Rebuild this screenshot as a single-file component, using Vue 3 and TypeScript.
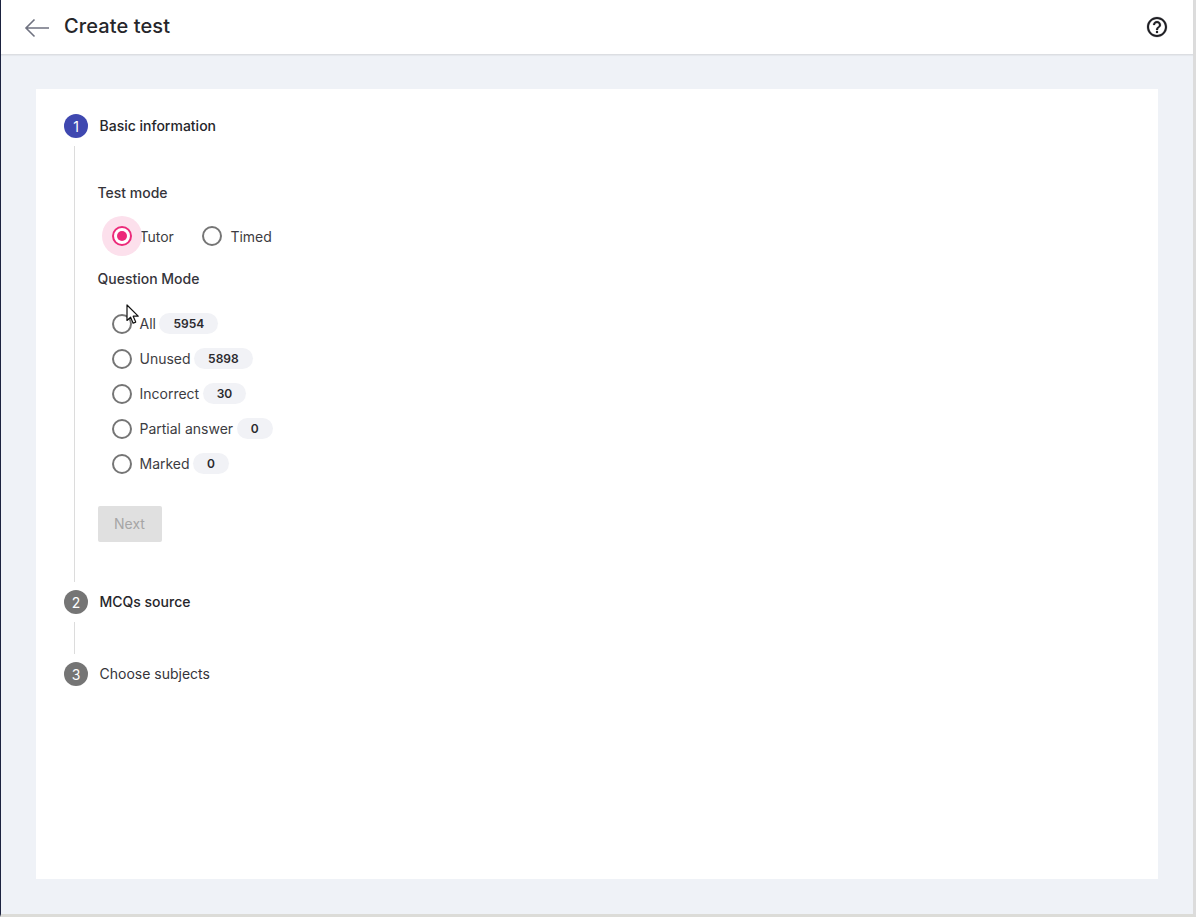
<script setup lang="ts">
interface Option { label: string; count: number }
const modes: string[] = ['Tutor', 'Timed']
const options: Option[] = [
  { label: 'All', count: 5954 },
  { label: 'Unused', count: 5898 },
  { label: 'Incorrect', count: 30 },
  { label: 'Partial answer', count: 0 },
  { label: 'Marked', count: 0 },
]
</script>

<template>
  <div class="page">
    <header class="topbar">
      <div class="title-wrap">
        <svg class="back" width="26" height="20" viewBox="0 0 26 20" fill="none" stroke="#6f7280" stroke-width="1.6">
          <path d="M25 10H2M10.500 1.500 2 10l8.500 8.500" />
        </svg>
        <h1 class="title">Create test</h1>
      </div>
      <svg class="help" width="24" height="24" viewBox="0 0 24 24" fill="#1f1f24" stroke="#1f1f24" stroke-width="0.2">
        <path d="M11 18h2v-2h-2v2zm1-16C6.480 2 2 6.480 2 12s4.480 10 10 10 10-4.480 10-10S17.520 2 12 2zm0 18c-4.410 0-8-3.590-8-8s3.590-8 8-8 8 3.590 8 8-3.590 8-8 8zm0-14c-2.210 0-4 1.790-4 4h2c0-1.100.9-2 2-2s2 .9 2 2c0 2-3 1.750-3 5h2c0-2.250 3-2.500 3-5 0-2.210-1.790-4-4-4z" />
      </svg>
    </header>

    <main class="main">
      <section class="card">
        <div class="step-head">
          <span class="num active">1</span>
          <span class="step-label strong">Basic information</span>
        </div>
        <div class="step-body">
          <div class="field-title">Test mode</div>
          <div class="mode-row">
            <label v-for="(m, i) in modes" :key="m" class="radio">
              <span class="ring" :class="{ on: i === 0 }"></span>
              <span class="radio-text">{{ m }}</span>
            </label>
          </div>
          <div class="field-title">Question Mode</div>
          <div class="option-list">
            <label v-for="o in options" :key="o.label" class="radio option">
              <span class="ring"></span>
              <span class="radio-text">{{ o.label }}</span>
              <span class="chip">{{ o.count }}</span>
            </label>
          </div>
          <button class="next" type="button" disabled>Next</button>
        </div>

        <div class="step-head">
          <span class="num">2</span>
          <span class="step-label strong">MCQs source</span>
        </div>
        <div class="step-gap"></div>
        <div class="step-head">
          <span class="num">3</span>
          <span class="step-label">Choose subjects</span>
        </div>
      </section>
    </main>

    <svg class="cursor" width="14" height="21" viewBox="0 0 14 21">
      <path d="M1 1v15.500l3.600-3.300 2.500 6 2.600-1.100-2.500-5.900H12.200z" fill="#fff" stroke="#111" stroke-width="1.200" stroke-linejoin="round" />
    </svg>
  </div>
</template>

<style>
html, body { margin: 0; background: #fff; }
</style>

<style scoped>
.page {
  position: relative;
  box-sizing: border-box;
  width: 1196px;
  height: 917px;
  display: flex;
  flex-direction: column;
  background: #eff2f7;
  border-left: 1px solid #1c2340;
  border-right: 3px solid #dcdcdc;
  border-bottom: 3px solid #dcdcd8;
  font-family: Inter, "Liberation Sans", sans-serif;
  color: #2b2a2e;
}
.topbar {
  box-sizing: border-box;
  height: 55px;
  flex: none;
  display: flex;
  align-items: center;
  justify-content: space-between;
  padding: 0 24px 1px 23px;
  background: #fff;
  border-bottom: 1px solid #dcdee2;
  box-shadow: 0 1px 1px rgba(0, 0, 0, 0.04);
}
.title-wrap { display: flex; align-items: center; gap: 14px; }
.back { margin-top: 2px; }
.title {
  margin: 0 0 2px;
  font-size: 20px;
  line-height: 28px;
  font-weight: 450;
  letter-spacing: 0.1px;
  color: #26262a;
}
.help { display: block; }
.main { flex: 1; padding: 34px 35px 35px 35px; display: flex; }
.card {
  flex: 1;
  background: #fff;
  padding: 25px 28px;
}
.step-head { display: flex; align-items: center; gap: 11.5px; height: 24px; }
.num {
  width: 24px;
  height: 24px;
  border-radius: 50%;
  background: #757575;
  color: #fff;
  font-size: 14px;
  display: flex;
  align-items: center;
  justify-content: center;
}
.num.active { background: #3f48b0; }
.step-label { font-size: 14px; line-height: 20px; color: #35343a; }
.step-label.strong { font-weight: 450; color: #26262a; }
.step-body {
  margin: 8px 0 8px 10px;
  padding: 37px 0 40px 22.500px;
  border-left: 1px solid #dcdcdc;
}
.step-gap {
  height: 32px;
  margin: 8px 0 8px 10px;
  border-left: 1px solid #dcdcdc;
}
.field-title {
  font-size: 14px;
  line-height: 20px;
  font-weight: 450;
  color: #35343a;
}
.mode-row {
  display: flex;
  gap: 28px;
  height: 40px;
  margin: 13px 0;
  padding-left: 14.500px;
  align-items: center;
}
.mode-row .radio-text { margin-top: 2px; }
.mode-row .radio + .radio { gap: 8.500px; }
.radio { display: flex; align-items: center; gap: 7.500px; }
.radio-text { font-size: 14px; line-height: 20px; color: #3d3c42; }
.ring {
  position: relative;
  box-sizing: border-box;
  width: 20px;
  height: 20px;
  border-radius: 50%;
  border: 2px solid #757575;
  flex: none;
}
.ring.on {
  border-color: #ec2a7a;
  background: #fff;
  box-shadow: 0 0 0 10px #fce0ec;
}
.ring.on::after {
  content: "";
  position: absolute;
  left: 3px;
  top: 3px;
  width: 10px;
  height: 10px;
  border-radius: 50%;
  background: #ec2a7a;
}
.option-list {
  display: flex;
  flex-direction: column;
  margin: 17px 0 25px;
  padding-left: 14.500px;
}
.option { height: 35px; }
.chip {
  margin-left: -4px;
  height: 21px;
  padding: 0 14px;
  border-radius: 11px;
  background: #f1f2f6;
  font-size: 12px;
  font-weight: 600;
  line-height: 21px;
  color: #2b2a2e;
}
.next {
  display: block;
  width: 64px;
  height: 36px;
  padding: 0 0 2px;
  border: none;
  border-radius: 2px;
  background: #e0e0e0;
  color: #a6a6a6;
  font-family: inherit;
  font-size: 14px;
  font-weight: 400;
}
.cursor {
  position: absolute;
  left: 125px;
  top: 304px;
}
</style>
